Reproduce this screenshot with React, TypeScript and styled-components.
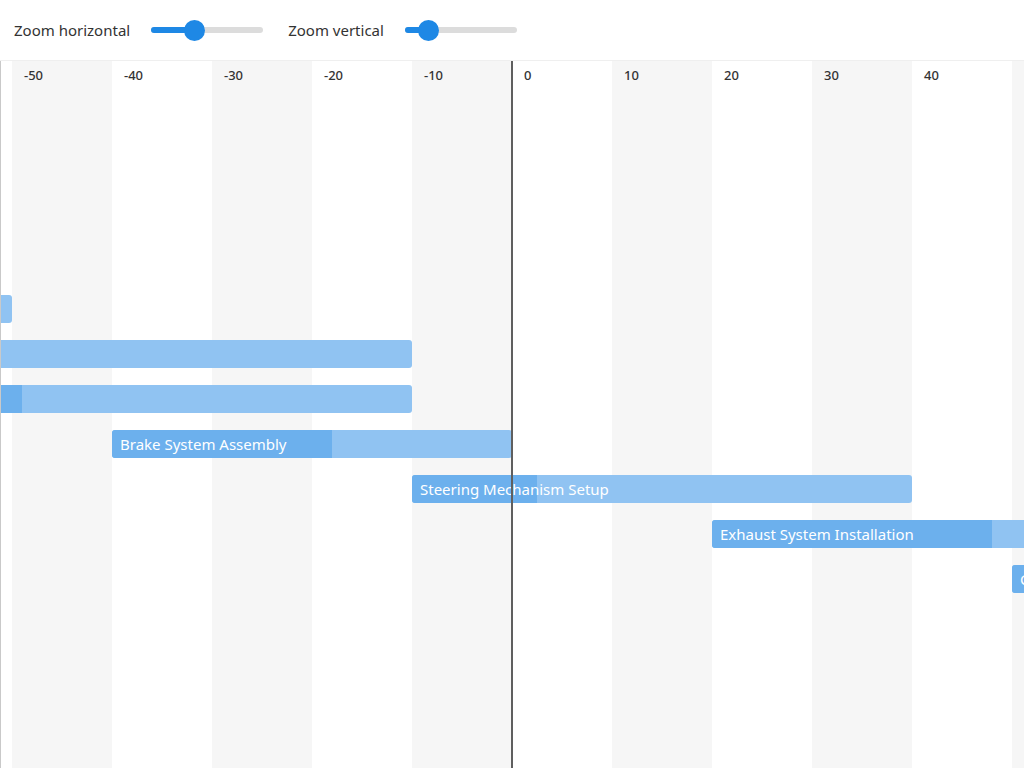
import React from "react";
import styled, { createGlobalStyle } from "styled-components";

const GlobalStyle = createGlobalStyle`
  html, body {
    margin: 0;
    padding: 0;
    background: #ffffff;
    font-family: "Noto Sans", "Open Sans", Arial, sans-serif;
    color: #333333;
  }
  * { box-sizing: border-box; }
`;

const VIEW_WIDTH = 1023;
const PX_PER_UNIT = 10;
const VIEW_START = -51.1;
const FIRST_TICK = -60;
const LAST_TICK = 50;
const ROW_HEIGHT = 45;

type Task = { row: number; start: number; end: number; progress: number; name: string };

const tasks: Task[] = [
  { row: 4, start: -80, end: -50, progress: 0.2, name: "Axle Installation" },
  { row: 5, start: -70, end: -10, progress: 0.1, name: "Wiring Harness Routing" },
  { row: 6, start: -70, end: -10, progress: 0.35, name: "Fuel System Integration" },
  { row: 7, start: -40, end: 0, progress: 0.55, name: "Brake System Assembly" },
  { row: 8, start: -10, end: 40, progress: 0.25, name: "Steering Mechanism Setup" },
  { row: 9, start: 20, end: 55, progress: 0.8, name: "Exhaust System Installation" },
  { row: 10, start: 50, end: 85, progress: 0.3, name: "Cooling System Integration" },
];

const ticks: number[] = [];
for (let t = FIRST_TICK; t <= LAST_TICK; t += 10) ticks.push(t);

const toX = (t: number) => (t - VIEW_START) * PX_PER_UNIT;

// a tick label is printed only when it sits fully inside the viewport
const labelVisible = (t: number) => toX(t) + 12 >= 0 && toX(t) + 40 <= VIEW_WIDTH;
// a bar caption is printed only when its start lies inside the viewport
const captionVisible = (task: Task) => toX(task.start) >= 0 && toX(task.start) < VIEW_WIDTH;

const Page = styled.div`
  display: flex;
  flex-direction: column;
  width: 1024px;
  height: 768px;
  overflow: hidden;
`;

const Toolbar = styled.div`
  display: flex;
  align-items: center;
  height: 61px;
  padding: 0 14px;
  border-bottom: 1px solid #efefef;
  flex-shrink: 0;
`;

const Control = styled.label`
  display: flex;
  align-items: center;
  gap: 21px;
  margin-right: 25px;
  font-size: 15px;
  color: #333;
`;

const Track = styled.div`
  position: relative;
  width: 112px;
  height: 6px;
  border-radius: 3px;
  background: #dcdcdc;
`;

const Fill = styled.div`
  position: absolute;
  left: 0;
  top: 0;
  bottom: 0;
  border-radius: 3px;
  background: #1e88e5;
`;

const Thumb = styled.div`
  position: absolute;
  top: 50%;
  width: 21px;
  height: 21px;
  margin: -10.5px 0 0 -10.5px;
  border-radius: 50%;
  background: #1e88e5;
`;

const Slider = ({ value }: { value: number }) => (
  <Track>
    <Fill style={{ width: `${value * 100}%` }} />
    <Thumb style={{ left: `${value * 100}%` }} />
  </Track>
);

const Chart = styled.div`
  position: relative;
  flex: 1;
  overflow: hidden;
  border-left: 1px solid #c9c9c9;
`;

const Columns = styled.div`
  display: flex;
  height: 100%;
`;

const Column = styled.div<{ $shaded: boolean }>`
  flex: 0 0 100px;
  height: 100%;
  background: ${(p) => (p.$shaded ? "#f6f6f6" : "#ffffff")};
`;

const TickLabel = styled.div`
  height: 45px;
  padding: 6px 12px;
  font-size: 13px;
  font-weight: 500;
  line-height: 16px;
  color: #333;
`;

const Rows = styled.div`
  position: absolute;
  top: 45px;
  left: 0;
  right: 0;
  bottom: 0;
  display: flex;
  flex-direction: column;
`;

const Row = styled.div`
  position: relative;
  flex: 0 0 ${ROW_HEIGHT}px;
`;

const Bar = styled.div`
  position: absolute;
  top: 8.5px;
  height: 28px;
  border-radius: 3px;
  background: #90c3f2;
  overflow: hidden;
  display: flex;
  align-items: center;
`;

const Progress = styled.div`
  position: absolute;
  left: 0;
  top: 0;
  bottom: 0;
  background: #6cb0ed;
`;

const BarLabel = styled.span`
  position: relative;
  padding-left: 8px;
  font-size: 15px;
  color: #ffffff;
  white-space: nowrap;
`;

const TodayLine = styled.div`
  position: absolute;
  top: 0;
  bottom: 0;
  width: 2px;
  margin-left: -1px;
  background: #5f5f5f;
  z-index: 2;
`;

export default function App() {
  const rowCount = 14;
  return (
    <>
      <GlobalStyle />
      <Page>
        <Toolbar>
          <Control>
            Zoom horizontal
            <Slider value={0.384} />
          </Control>
          <Control>
            Zoom vertical
            <Slider value={0.214} />
          </Control>
        </Toolbar>
        <Chart>
          <Columns style={{ marginLeft: toX(FIRST_TICK) }}>
            {ticks.map((t) => (
              <Column key={t} $shaded={Math.abs(t / 10) % 2 === 1}>
                <TickLabel>{labelVisible(t) ? t : null}</TickLabel>
              </Column>
            ))}
          </Columns>
          <Rows>
            {Array.from({ length: rowCount }, (_, i) => {
              const task = tasks.find((tk) => tk.row === i);
              return (
                <Row key={i}>
                  {task && (
                    <Bar
                      style={{
                        left: toX(task.start),
                        width: (task.end - task.start) * PX_PER_UNIT,
                      }}
                    >
                      <Progress style={{ width: `${task.progress * 100}%` }} />
                      {captionVisible(task) && <BarLabel>{task.name}</BarLabel>}
                    </Bar>
                  )}
                </Row>
              );
            })}
          </Rows>
          <TodayLine style={{ left: toX(0) }} />
        </Chart>
      </Page>
    </>
  );
}
